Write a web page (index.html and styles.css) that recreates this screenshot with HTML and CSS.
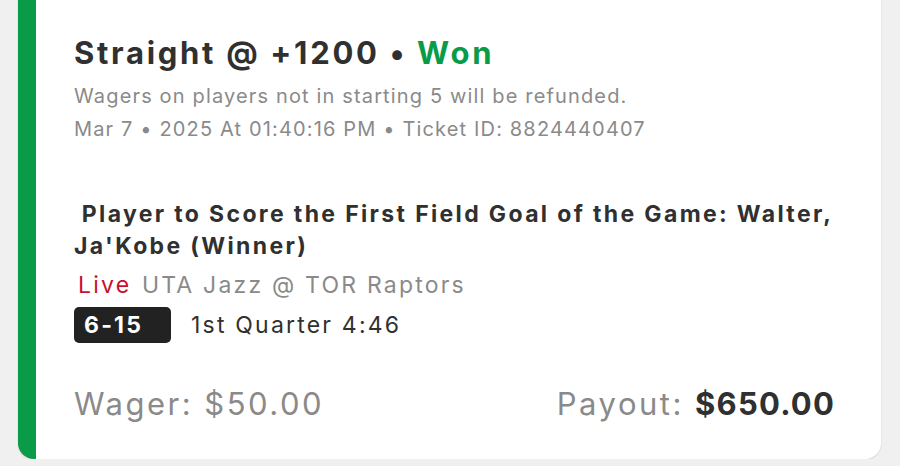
FILE: index.html
```html
<!doctype html>
<html lang="en">
  <head>
    <meta charset="utf-8">
    <meta name="viewport" content="width=device-width, initial-scale=1">
    <title>Bet Ticket</title>
    <link rel="stylesheet" href="styles.css">
  </head>
  <body>
    <div class="card">
      <div class="head">
        <h1>Straight @ +1200 <span class="dot">&bull;</span> <span class="won">Won</span></h1>
        <p class="note">Wagers on players not in starting 5 will be refunded.</p>
        <p class="note">Mar 7 &bull; 2025 At 01:40:16 PM &bull; Ticket ID: 8824440407</p>
      </div>

      <div class="leg">
        <h2>&nbsp;Player to Score the First Field Goal of the Game: Walter, Ja'Kobe (Winner)</h2>
        <div class="game">
          <span class="live">Live</span>
          <span>UTA Jazz @ TOR Raptors</span>
        </div>
        <div class="status">
          <span class="score">6-15</span>
          <span class="clock">1st Quarter 4:46</span>
        </div>
      </div>

      <div class="totals">
        <span>Wager: $50.00</span>
        <span>Payout: <b>$650.00</b></span>
      </div>
    </div>
  </body>
</html>
```

FILE: styles.css
```css
body {
  margin: 0;
  background-color: #f0f0f0;
  font-family: Inter, "Noto Sans", sans-serif;
  color: #303030;
}
.card {
  margin: -20px 19px 0 18px;
  background-color: #fff;
  border-left: 18px solid #0a9b49;
  border-radius: 16px;
  box-shadow: 0 1px 2px rgba(0, 0, 0, 0.12);
  padding: 53px 46px 35px 38px;
  height: 479px;
  box-sizing: border-box;
  display: flex;
  flex-direction: column;
}
h1 {
  margin: 0 0 7px;
  font-size: 31px;
  font-weight: 700;
  line-height: 40px;
  letter-spacing: 2.7px;
}
.won {
  color: #0a9b49;
}
.note {
  margin: 0;
  font-size: 20px;
  line-height: 33px;
  letter-spacing: 1.15px;
  color: #8a8a8a;
}
.leg {
  margin-top: 52px;
}
h2 {
  margin: 0;
  font-size: 23px;
  font-weight: 700;
  line-height: 32px;
  letter-spacing: 2.35px;
}
.game {
  margin-top: 4px;
  font-size: 23px;
  line-height: 38px;
  letter-spacing: 2.2px;
  color: #8a8a8a;
}
.live {
  color: #c8102e;
  margin-left: 4px;
  margin-right: 2px;
}
.status {
  display: flex;
  align-items: center;
  gap: 20px;
  margin-top: 3px;
  font-size: 23px;
  letter-spacing: 2.2px;
}
.score {
  background-color: #222;
  color: #fff;
  font-weight: 700;
  border-radius: 5px;
  width: 97px;
  box-sizing: border-box;
  padding: 0 10px;
  line-height: 36px;
}
.totals {
  margin-top: auto;
  display: flex;
  justify-content: space-between;
  font-size: 31px;
  line-height: 40px;
  letter-spacing: 2.5px;
  color: #8a8a8a;
}
.totals b {
  color: #303030;
  letter-spacing: 1.2px;
}
```
